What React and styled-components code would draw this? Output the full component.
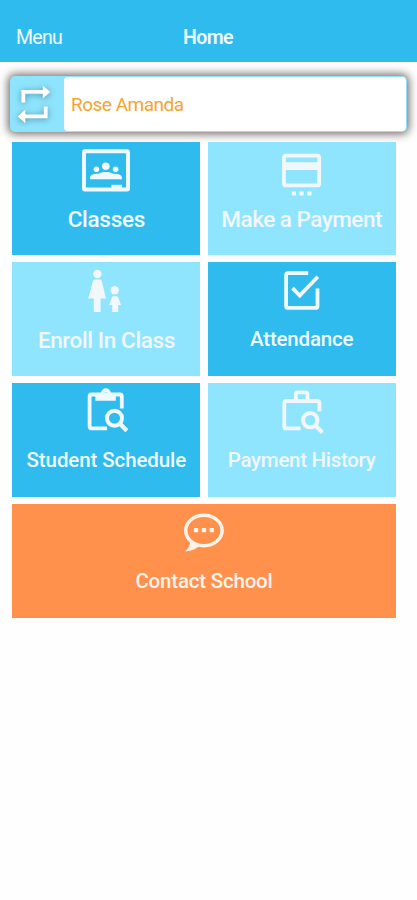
import React from 'react'
import styled, { createGlobalStyle } from 'styled-components'

const GlobalStyle = createGlobalStyle`
    * {
        box-sizing: border-box;
    }
    body {
        margin: 0;
        background: #fefefe;
        font-family: Roboto, Inter, 'Liberation Sans', sans-serif;
    }
`;
const Screen = styled.div`
    width: 417px;
    height: 900px;
    overflow: hidden;
`;
const Header = styled.header`
    height: 62px;
    padding: 26px 17px 0 16px;
    display: grid;
    grid-template-columns: 167px 1fr;
    background: #2fbbed;
    color: #effaff;
`;
const MenuButton = styled.span`
    font-size: 19.5px;
    line-height: 24px;
    letter-spacing: -0.7px;
    font-weight: 400;
`;
const Title = styled.h1`
    margin: 0;
    font-size: 19.5px;
    line-height: 24px;
    letter-spacing: -0.6px;
    font-weight: 600;
`;
const StudentCard = styled.section`
    margin: 13.5px 10px 0 9.5px;
    height: 56.5px;
    padding: 1px;
    display: flex;
    border-radius: 5px;
    background: #8ee4fd;
    box-shadow: 0 0 8px 2px rgba(70, 58, 54, 0.75);
`;
const SwitchButton = styled.div`
    width: 53.5px;
    flex-shrink: 0;
    svg {
        display: block;
        filter: drop-shadow(0 1px 3px rgba(20, 70, 90, 0.55));
    }
`;
const StudentName = styled.div`
    flex: 1;
    padding: 1px 0 0 7px;
    border-radius: 4px;
    background: #fff;
    color: #f7a42c;
    font-size: 19px;
    line-height: 54px;
    letter-spacing: -0.5px;
`;
const Tiles = styled.main`
    margin: 9.5px 21.3px 0 12.3px;
    display: grid;
    grid-template-columns: 1fr 1fr;
    grid-auto-rows: 113.7px;
    gap: 7.2px;
`;
const Tile = styled.div`
    grid-column: ${p => p.$wide ? 'span 2' : 'auto'};
    display: flex;
    flex-direction: column;
    align-items: center;
    background: ${p => p.$color};
    color: ${p => p.$ink};
`;
const TileIcon = styled.svg`
    width: 64px;
    height: 60px;
    flex-shrink: 0;
`;
const Label = styled.span`
    margin-top: ${p => p.$top || 4}px;
    font-size: ${p => p.$size || 20.5}px;
    line-height: 26px;
    letter-spacing: ${p => p.$tracking}px;
    font-weight: 500;
    white-space: nowrap;
`;

const line = { fill: 'none', stroke: 'currentColor', strokeLinejoin: 'round' }

const SwitchIcon = () => (
  <svg width="53" height="54" viewBox="10.5 76.5 53 54">
    <g fill="none" stroke="#fff" strokeWidth="3.8">
      <path d="M22.8 102V91.3H43" />
      <path d="M45.2 106v9.8H24" />
    </g>
    <path fill="#fff" d="M42.3 85l7.6 6.5-7.6 6.6zM24.8 109v13.8l-7.6-6.9z" />
  </svg>
)

const ClassesIcon = () => (
  <TileIcon viewBox="0 0 64 60">
    <rect {...line} strokeWidth="4" x="10" y="9.2" width="44" height="38.4" rx="1" />
    <g fill="currentColor">
      <circle cx="31.8" cy="24.2" r="3.8" />
      <circle cx="22.4" cy="27.2" r="2.8" />
      <circle cx="41.6" cy="27.2" r="2.8" />
      <path d="M16 37.2v-1.8c0-2.6 5-4.3 8.4-3.6 4-2.4 11-2.4 15 0 3.4-.7 8.6 1 8.6 3.6v1.8z" />
      <path d="M37.4 42.8H48V47H37.4z" />
    </g>
  </TileIcon>
)

const PaymentIcon = () => (
  <TileIcon viewBox="0 0 64 60">
    <rect {...line} strokeWidth="3.8" x="14" y="13.7" width="35.2" height="29.7" rx="2" />
    <path fill="currentColor" d="M14 20.3h36v7.7H14zM21.8 49.6h4.2v4h-4.2zM29.5 49.6h4.2v4h-4.2zM37.3 49.6h4.2v4h-4.2z" />
  </TileIcon>
)

const EnrollIcon = () => (
  <TileIcon viewBox="0 0 64 60" fill="currentColor">
    <circle cx="23.4" cy="12" r="4.2" />
    <path d="M21.4 17.6h4c1.2 0 2 .6 2.4 1.6L32 36.4h-5.4v13.5h-6.8V36.4h-5.6L19 19.2c.3-1 1.2-1.6 2.4-1.6z" />
    <circle cx="40.7" cy="28.3" r="4.2" />
    <path d="M39.3 34.3h2.9c1.2 0 1.9.6 2.3 1.6l2.5 7h-2.8v7h-6v-7h-3l2.4-7c.3-1 .8-1.6 1.7-1.6z" />
  </TileIcon>
)

const AttendanceIcon = () => (
  <TileIcon viewBox="0 0 64 60">
    <path {...line} strokeWidth="3.8" d="M38.2 11.2H18.1a2 2 0 0 0-2 2v30.7a2 2 0 0 0 2 2h27.4a2 2 0 0 0 2-2V26.4" />
    <path fill="none" stroke="currentColor" strokeWidth="3.8" d="M22.5 26.2l7.3 7.3 18-18.8" />
  </TileIcon>
)

const ScheduleIcon = () => (
  <TileIcon viewBox="0 0 64 60">
    <path {...line} strokeWidth="3.8" d="M33 45.3H17.6a2 2 0 0 1-2-2V13.5a2 2 0 0 1 2-2h28.2a2 2 0 0 1 2 2V25.5" />
    <path fill="currentColor" fillRule="evenodd" d="M21.4 17.7V10h5.4c.8-3 2.7-4.8 5.1-4.8S36.3 7 37.1 10h4.7v7.7zM31.9 9.2a2 2 0 1 0 0 4 2 2 0 0 0 0-4z" />
    <circle {...line} strokeWidth="3.9" cx="40.5" cy="35.2" r="7.5" />
    <path {...line} strokeWidth="4.2" d="M45.8 40.5l7 7.3" />
  </TileIcon>
)

const HistoryIcon = () => (
  <TileIcon viewBox="0 0 64 60">
    <path {...line} strokeWidth="3.8" d="M30.6 45.4H16.3a2 2 0 0 1-2-2V20a2 2 0 0 1 2-2h31.1a2 2 0 0 1 2 2v8.5" />
    <path {...line} strokeWidth="3.8" d="M25.9 18v-6.6a2 2 0 0 1 2-2h7.6a2 2 0 0 1 2 2V18" />
    <circle {...line} strokeWidth="3.9" cx="40.3" cy="37.2" r="7.2" />
    <path {...line} strokeWidth="4" d="M45.4 42.3l7 7.2" />
  </TileIcon>
)

const ContactIcon = () => (
  <TileIcon viewBox="0 0 64 60">
    <ellipse {...line} strokeWidth="3.5" cx="31.9" cy="26.5" rx="18.2" ry="15.2" />
    <path fill="currentColor" d="M18.2 37.5l5.2 2.3 5.2.8c-3.6 4.2-8.8 6.500-15.600 7 3-2.600 5-5.600 5.200-10.100z" />
    <path fill="currentColor" d="M21.9 24h4.3v4.2h-4.3zM29.8 24h4.3v4.2h-4.3zM37.6 24h4.3v4.2h-4.3z" />
  </TileIcon>
)

const blue = { $color: '#2fbbed', $ink: '#effaff' }
const sky = { $color: '#90e5fe', $ink: '#f1f7fb' }
const orange = { $color: '#ff914d', $ink: '#fff3ea' }

const items = [
  { text: 'Classes', Icon: ClassesIcon, theme: blue, size: 22.5, tracking: -0.3 },
  { text: 'Make a Payment', Icon: PaymentIcon, theme: sky, size: 22.5, tracking: -0.5 },
  { text: 'Enroll In Class', Icon: EnrollIcon, theme: sky, size: 22.5, tracking: -0.4, top: 5 },
  { text: 'Attendance', Icon: AttendanceIcon, theme: blue, tracking: -0.2 },
  { text: 'Student Schedule', Icon: ScheduleIcon, theme: blue, tracking: -0.1 },
  { text: 'Payment History', Icon: HistoryIcon, theme: sky, tracking: -0.3 },
  { text: 'Contact School', Icon: ContactIcon, theme: orange, tracking: -0.2, wide: true },
]

export default function App() {
  return (
    <Screen>
      <GlobalStyle />
      <Header>
        <MenuButton>Menu</MenuButton>
        <Title>Home</Title>
      </Header>
      <StudentCard>
        <SwitchButton><SwitchIcon /></SwitchButton>
        <StudentName>Rose Amanda</StudentName>
      </StudentCard>
      <Tiles>
        {items.map(({ text, Icon, theme, size, tracking, top, wide }) => (
          <Tile key={text} {...theme} $wide={wide}>
            <Icon />
            <Label $size={size} $tracking={tracking} $top={top}>{text}</Label>
          </Tile>
        ))}
      </Tiles>
    </Screen>
  )
}
